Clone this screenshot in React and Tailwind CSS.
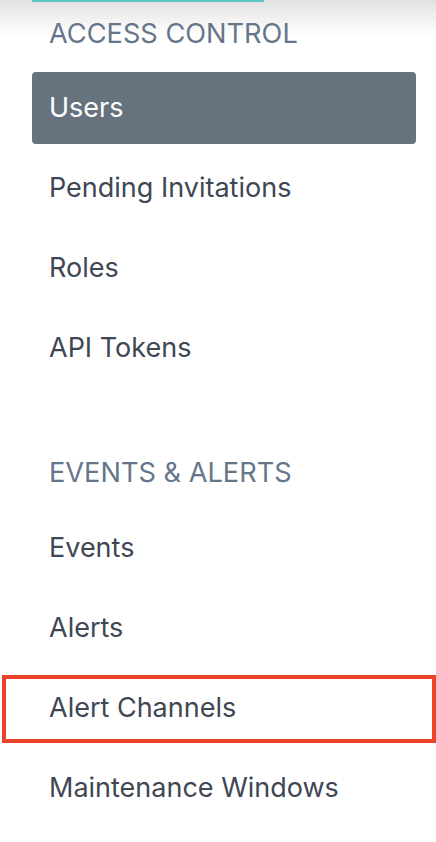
import React from "react";

const accessItems = ["Users", "Pending Invitations", "Roles", "API Tokens"];
const eventItems = ["Events", "Alerts", "Alert Channels", "Maintenance Windows"];

const NavItem = ({ label, active, highlighted }) => (
  <li
    className={`relative flex items-center h-[72px] rounded-[4px] pl-[17px] pt-[1px] ${
      active ? "bg-[#67727f] text-white" : "text-[#3e4753]"
    }`}
  >
    <span>{label}</span>
    {/* annotation box */}
    {highlighted && (
      <span className="absolute top-[3px] bottom-[1px] left-[-30px] right-[-20px] border-[4px] border-[#ec4329]" />
    )}
  </li>
);

export default function App() {
  return (
    <div
      className="relative w-[436px] h-[842px] bg-white overflow-hidden text-[27px]"
      style={{ fontFamily: "Inter, 'Noto Sans', sans-serif" }}
    >
      {/* top accent + fading shadow */}
      <div className="absolute top-0 left-0 right-0 h-[36px] bg-gradient-to-b from-[#e2e2e2] to-white" />
      <div className="absolute top-0 left-[32px] w-[232px] h-[2px] bg-[#5ec7c6]" />

      <aside className="relative pl-[32px] pr-[20px] pt-[14px]">
        {/* Access control */}
        <p className="pl-[17px] h-[38px] leading-[38px] pt-[1px] uppercase text-[27.2px] text-[#66768a]">Access control</p>
        <ul className="flex flex-col gap-y-[8px] mt-[20px]">
          {accessItems.map((item) => (
            <NavItem key={item} label={item} active={item === "Users"} />
          ))}
        </ul>

        {/* Events & alerts */}
        <p className="pl-[17px] mt-[69px] h-[38px] leading-[38px] pt-[1px] uppercase text-[27.2px] text-[#66768a]">Events &amp; Alerts</p>
        <ul className="flex flex-col gap-y-[8px] mt-[21px]">
          {eventItems.map((item) => (
            <NavItem key={item} label={item} highlighted={item === "Alert Channels"} />
          ))}
        </ul>
      </aside>
    </div>
  );
}
